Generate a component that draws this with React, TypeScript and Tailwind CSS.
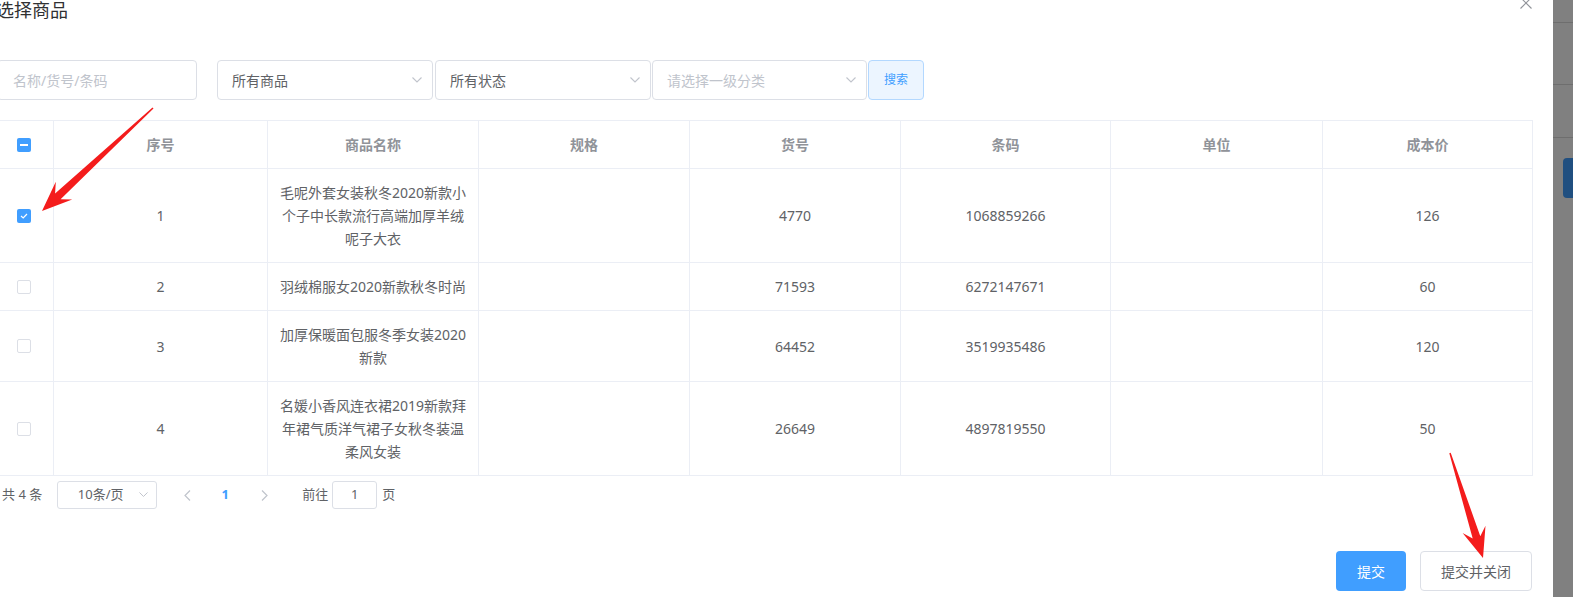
import React from "react";

function Chevron({ size = 10 }: { size?: number }) {
  return (
    <svg width={size} height={size * 0.6} viewBox="0 0 10 6" fill="none">
      <polyline points="0.5,0.5 5,5 9.5,0.5" stroke="#c0c4cc" strokeWidth="1.1" />
    </svg>
  );
}

function arrowPoints(tx: number, ty: number, hx: number, hy: number, headLen: number, headW: number, shaftW: number, tailW: number) {
  const dx = hx - tx;
  const dy = hy - ty;
  const len = Math.sqrt(dx * dx + dy * dy);
  const ux = dx / len;
  const uy = dy / len;
  const nx = -uy;
  const ny = ux;
  const bx = hx - headLen * ux;
  const by = hy - headLen * uy;
  const mx = hx - headLen * 0.72 * ux;
  const my = hy - headLen * 0.72 * uy;
  const pts: [number, number][] = [
    [tx + (tailW / 2) * nx, ty + (tailW / 2) * ny],
    [mx + (shaftW / 2) * nx, my + (shaftW / 2) * ny],
    [bx + headW * nx, by + headW * ny],
    [hx, hy],
    [bx - headW * nx, by - headW * ny],
    [mx - (shaftW / 2) * nx, my - (shaftW / 2) * ny],
    [tx - (tailW / 2) * nx, ty - (tailW / 2) * ny],
  ];
  return pts.map((p) => `${p[0].toFixed(1)},${p[1].toFixed(1)}`).join(" ");
}

type Row = { idx: number; name: string; spec: string; code: string; bar: string; unit: string; cost: string; checked: boolean };

const rows: Row[] = [
  { idx: 1, name: "毛呢外套女装秋冬2020新款小个子中长款流行高端加厚羊绒呢子大衣", spec: "", code: "4770", bar: "1068859266", unit: "", cost: "126", checked: true },
  { idx: 2, name: "羽绒棉服女2020新款秋冬时尚", spec: "", code: "71593", bar: "6272147671", unit: "", cost: "60", checked: false },
  { idx: 3, name: "加厚保暖面包服冬季女装2020新款", spec: "", code: "64452", bar: "3519935486", unit: "", cost: "120", checked: false },
  { idx: 4, name: "名媛小香风连衣裙2019新款拜年裙气质洋气裙子女秋冬装温柔风女装", spec: "", code: "26649", bar: "4897819550", unit: "", cost: "50", checked: false },
];

function CheckBox({ state }: { state: "on" | "off" | "half" }) {
  if (state === "off") {
    return <span className="block h-[14px] w-[14px] rounded-[2px] border border-[#dcdfe6] bg-white" />;
  }
  return (
    <span className="flex h-[14px] w-[14px] items-center justify-center rounded-[2px] bg-[#409eff]">
      {state === "half" ? (
        <span className="block h-[2px] w-[8px] bg-white" />
      ) : (
        <svg width="10" height="8" viewBox="0 0 10 8" fill="none">
          <polyline points="2,4 4.2,6 8,2" stroke="white" strokeWidth="1.2" />
        </svg>
      )}
    </span>
  );
}

const cellCls = "border-r border-b border-[#ebeef5] px-[10px] py-[12px] text-center align-middle leading-[23px]";

export default function App() {
  return (
    <div className="relative flex h-[597px] w-[1573px] overflow-hidden bg-white font-['Noto_Sans','Noto_Sans_CJK_SC',sans-serif]">
      <div className="relative w-[1553px] shrink-0 bg-white">
        <div className="ml-[-2px] w-[1534px]">
          <div className="ml-[-2px] mt-[-2px] text-[18px] leading-[24px] text-[#303133]">选择商品</div>

          <div className="mt-[38px] flex items-center">
            <div className="ml-[-1px] flex h-[40px] w-[200px] items-center rounded-[4px] border border-[#dcdfe6] pl-[15px] text-[14px] text-[#c0c4cc]">
              名称/货号/条码
            </div>
            <div className="ml-[20px] flex h-[40px] w-[216px] items-center justify-between rounded-[4px] border border-[#dcdfe6] pl-[14px] pr-[10px] text-[14px] text-[#606266]">
              <span>所有商品</span>
              <Chevron />
            </div>
            <div className="ml-[2px] flex h-[40px] w-[216px] items-center justify-between rounded-[4px] border border-[#dcdfe6] pl-[14px] pr-[10px] text-[14px] text-[#606266]">
              <span>所有状态</span>
              <Chevron />
            </div>
            <div className="ml-[1px] flex h-[40px] w-[215px] items-center justify-between rounded-[4px] border border-[#dcdfe6] pl-[14px] pr-[10px] text-[14px] text-[#c0c4cc]">
              <span>请选择一级分类</span>
              <Chevron />
            </div>
            <div className="ml-[1px] flex h-[40px] w-[56px] items-center justify-center rounded-[4px] border border-[#b3d8ff] bg-[#ecf5ff] text-[12px] text-[#409eff]">
              搜索
            </div>
          </div>

          <table className="mt-[20px] w-[1534px] table-fixed border-collapse border-l border-t border-[#ebeef5] text-[14px] text-[#606266]">
            <colgroup>
              <col className="w-[55px]" />
              <col className="w-[214px]" />
              <col className="w-[211px]" />
              <col className="w-[211px]" />
              <col className="w-[211px]" />
              <col className="w-[210px]" />
              <col className="w-[212px]" />
              <col className="w-[210px]" />
            </colgroup>
            <thead>
              <tr className="font-bold text-[#909399]">
                <th className={cellCls + " pl-[18px] text-left"}>
                  <CheckBox state="half" />
                </th>
                <th className={cellCls}>序号</th>
                <th className={cellCls}>商品名称</th>
                <th className={cellCls}>规格</th>
                <th className={cellCls}>货号</th>
                <th className={cellCls}>条码</th>
                <th className={cellCls}>单位</th>
                <th className={cellCls}>成本价</th>
              </tr>
            </thead>
            <tbody>
              {rows.map((r) => (
                <tr key={r.idx}>
                  <td className={cellCls + " pl-[18px] text-left"}>
                    <CheckBox state={r.checked ? "on" : "off"} />
                  </td>
                  <td className={cellCls}>{r.idx}</td>
                  <td className={cellCls}>{r.name}</td>
                  <td className={cellCls}>{r.spec}</td>
                  <td className={cellCls}>{r.code}</td>
                  <td className={cellCls}>{r.bar}</td>
                  <td className={cellCls}>{r.unit}</td>
                  <td className={cellCls}>{r.cost}</td>
                </tr>
              ))}
            </tbody>
          </table>

          <div className="mt-[5px] flex h-[28px] items-center pl-[4px] text-[13px] text-[#606266]">
            <span>共 4 条</span>
            <div className="ml-[15px] flex h-[28px] w-[100px] items-center rounded-[3px] border border-[#dcdfe6] pl-[4px] pr-[8px]">
              <span className="flex-1 text-center">10条/页</span>
              <Chevron size={9} />
            </div>
            <div className="ml-[12px] flex w-[36px] justify-center">
              <svg width="7" height="11" viewBox="0 0 7 11" fill="none">
                <polyline points="6,0.5 1,5.5 6,10.5" stroke="#c0c4cc" strokeWidth="1.2" />
              </svg>
            </div>
            <div className="ml-[2px] w-[36px] text-center font-bold text-[#409eff]">1</div>
            <div className="ml-[3px] flex w-[36px] justify-center">
              <svg width="7" height="11" viewBox="0 0 7 11" fill="none">
                <polyline points="1,0.5 6,5.5 1,10.5" stroke="#c0c4cc" strokeWidth="1.2" />
              </svg>
            </div>
            <span className="ml-[20px]">前往</span>
            <div className="ml-[4px] flex h-[28px] w-[45px] items-center justify-center rounded-[3px] border border-[#dcdfe6]">1</div>
            <span className="ml-[5px]">页</span>
          </div>

          <div className="mt-[42px] flex justify-end">
            <div className="flex h-[40px] w-[70px] items-center justify-center rounded-[4px] bg-[#409eff] text-[14px] text-white">提交</div>
            <div className="ml-[14px] flex h-[40px] w-[112px] items-center justify-center rounded-[4px] border border-[#dcdfe6] bg-white text-[14px] text-[#606266]">
              提交并关闭
            </div>
          </div>
        </div>

        <svg className="absolute right-[21px] top-[-3px]" width="12" height="12" viewBox="0 0 12 12" fill="none">
          <line x1="0.5" y1="0.5" x2="11.5" y2="11.5" stroke="#909399" strokeWidth="1.1" />
          <line x1="11.5" y1="0.5" x2="0.5" y2="11.5" stroke="#909399" strokeWidth="1.1" />
        </svg>
      </div>

      <div className="flex flex-1 flex-col bg-[#808080]">
        <div className="h-[22px]" />
        <div className="h-[1px] bg-[#6e6e6e]" />
        <div className="h-[61px]" />
        <div className="h-[1px] bg-[#6e6e6e]" />
        <div className="h-[52px]" />
        <div className="h-[1px] bg-[#6e6e6e]" />
        <div className="h-[20px]" />
        <div className="ml-[10px] h-[40px] rounded-l-[4px] bg-[#204f80]" />
      </div>

      <svg className="pointer-events-none absolute left-0 top-0" width="1573" height="597">
        <polygon points={arrowPoints(153, 108, 42, 211, 30, 12, 8, 1.5)} fill="#f41c1c" />
        <polygon points={arrowPoints(1450, 453, 1483, 558, 30, 12, 8, 1.5)} fill="#f41c1c" />
      </svg>
    </div>
  );
}
